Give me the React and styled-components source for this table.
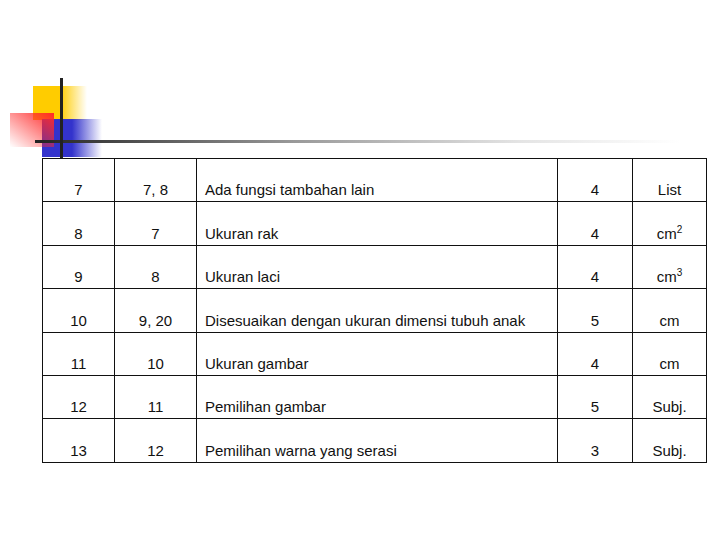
import React from 'react'
import styled, { createGlobalStyle } from 'styled-components'

const GlobalStyle = createGlobalStyle`
  body {
    margin: 0;
    background: #fff;
    font-family: "Liberation Sans", Arial, sans-serif;
  }
`

const Page = styled.div`
  width: 720px;
  height: 540px;
  background: #fff;
  overflow: hidden;
`

const Banner = styled.svg`
  display: block;
  width: 720px;
  height: 158px;
`

const Table = styled.table`
  margin-left: 42px;
  width: 664px;
  border-collapse: collapse;
  table-layout: fixed;
  border: 1px solid #111;
`

const Col = styled.col`
  width: ${p => p.$w}px;
`

const Row = styled.tr`
  height: 43.4px;
`

const Cell = styled.td`
  border: 1px solid #111;
  padding: 0 8px 3px;
  vertical-align: bottom;
  font-size: 15px;
  color: #111;
  text-align: ${p => (p.$left ? 'left' : 'center')};
  white-space: nowrap;
  line-height: 16px;
`

const Sup = styled.sup`
  font-size: 10px;
  line-height: 0;
  vertical-align: 6px;
`

const widths = [72, 82, 361, 75, 74]

const rows = [
  ['7', '7, 8', 'Ada fungsi tambahan lain', '4', 'List'],
  ['8', '7', 'Ukuran rak', '4', <>cm<Sup>2</Sup></>],
  ['9', '8', 'Ukuran laci', '4', <>cm<Sup>3</Sup></>],
  ['10', '9, 20', 'Disesuaikan dengan ukuran dimensi tubuh anak', '5', 'cm'],
  ['11', '10', 'Ukuran gambar', '4', 'cm'],
  ['12', '11', 'Pemilihan gambar', '5', 'Subj.'],
  ['13', '12', 'Pemilihan warna yang serasi', '3', 'Subj.'],
]

const Logo = () => (
  <Banner viewBox="0 0 720 158">
    <defs>
      <linearGradient id="yel" x1="0" x2="1" y1="0" y2="0">
        <stop offset="0" stopColor="#ffcc00" />
        <stop offset="0.5" stopColor="#ffcc00" />
        <stop offset="1" stopColor="#ffcc00" stopOpacity="0" />
      </linearGradient>
      <linearGradient id="blu" x1="0" x2="1" y1="0" y2="0">
        <stop offset="0" stopColor="#3333cc" />
        <stop offset="0.5" stopColor="#3333cc" />
        <stop offset="1" stopColor="#3333cc" stopOpacity="0" />
      </linearGradient>
      <linearGradient id="red" x1="1" x2="0" y1="0" y2="1">
        <stop offset="0" stopColor="#ff2a2a" />
        <stop offset="1" stopColor="#ff2a2a" stopOpacity="0" />
      </linearGradient>
      <linearGradient id="bar" x1="0" x2="1" y1="0" y2="0">
        <stop offset="0" stopColor="#222" />
        <stop offset="0.4" stopColor="#999" />
        <stop offset="0.75" stopColor="#e4e4e4" />
        <stop offset="1" stopColor="#fff" />
      </linearGradient>
    </defs>
    <rect x="33" y="86" width="54" height="34" fill="url(#yel)" />
    <rect x="42" y="119" width="60" height="38" fill="url(#blu)" />
    <rect x="10" y="113" width="44" height="34" fill="url(#red)" />
    <rect x="35" y="140" width="645" height="3" fill="url(#bar)" />
    <rect x="60" y="78" width="3" height="80" fill="#222" />
  </Banner>
)

export default function App() {
  return (
    <Page>
      <GlobalStyle />
      <Logo />
      <Table>
        <colgroup>
          {widths.map((w, i) => (
            <Col key={i} $w={w} />
          ))}
        </colgroup>
        <tbody>
          {rows.map((r, i) => (
            <Row key={i}>
              {r.map((c, j) => (
                <Cell key={j} $left={j === 2}>{c}</Cell>
              ))}
            </Row>
          ))}
        </tbody>
      </Table>
    </Page>
  )
}
